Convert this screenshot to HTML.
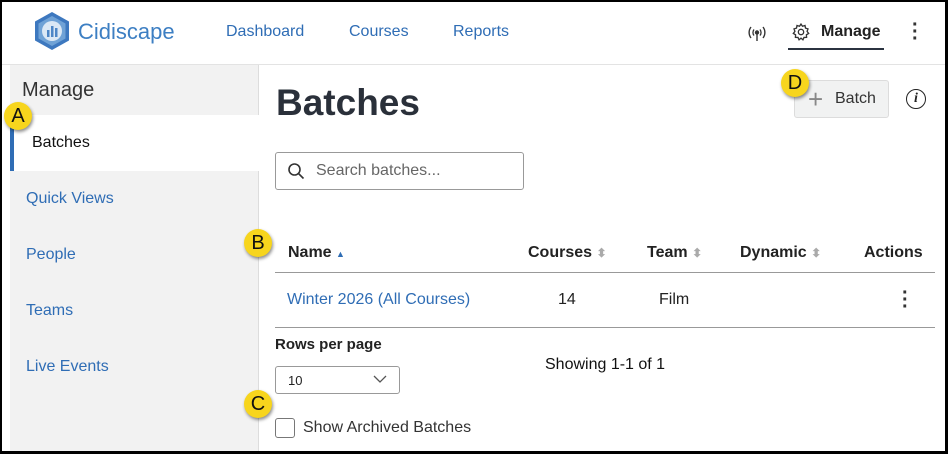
<!DOCTYPE html><html><head><style>
*{margin:0;padding:0;box-sizing:border-box}
body{width:948px;height:454px;position:relative;background:#fff;font-family:"Liberation Sans",sans-serif;overflow:hidden;color:#222}
.a{position:absolute}
.frame{left:0;top:0;width:948px;height:454px;border:2px solid #000;border-right-width:3px;border-bottom-width:3px;z-index:10;pointer-events:none}
.nav{color:#2f6db5;font-size:16px;top:23px}
.side{left:10px;top:65px;width:249px;height:389px;background:#f2f2f2;border-right:1px solid #ddd}
.si{left:26px;color:#2f6db5;font-size:16px}
.badge{width:28px;height:28px;border-radius:50%;background:#f7d51d;font-size:20px;color:#111;text-align:center;line-height:28px;box-shadow:1px 2px 3px rgba(0,0,0,.45);z-index:5}
.th{font-weight:bold;font-size:16px;top:244px;color:#222}
.sort{color:#aaa;font-size:12px}
</style></head><body>
<div class="a frame"></div>
<svg class="a" style="left:32px;top:11px" width="40" height="40" viewBox="0 0 40 40"><polygon points="20,1 37,10.5 37,29.5 20,39 3,29.5 3,10.5" fill="#3d78bf"/><polygon points="20,5 33.5,12.5 33.5,27.5 20,35 6.5,27.5 6.5,12.5" fill="#6fa2d6"/><circle cx="20" cy="20" r="10" fill="#dbe8f5"/><rect x="15" y="19" width="2.5" height="7" fill="#4d86c6"/><rect x="19" y="15" width="2.5" height="11" fill="#4d86c6"/><rect x="23" y="17" width="2.5" height="9" fill="#4d86c6"/></svg>
<div class="a" style="left:78px;top:19px;font-size:22px;color:#3d7fc3">Cidiscape</div>
<div class="a nav" style="left:226px">Dashboard</div>
<div class="a nav" style="left:349px">Courses</div>
<div class="a nav" style="left:453px">Reports</div>
<svg class="a" style="left:746px;top:24px" width="22" height="18" viewBox="0 0 22 18" fill="none" stroke="#333" stroke-width="1.4"><path d="M5 3a9 9 0 0 0 0 11M17 3a9 9 0 0 1 0 11M8 5.5a5 5 0 0 0 0 6M14 5.5a5 5 0 0 1 0 6"/><circle cx="11" cy="8.5" r="1.5" fill="#333"/><path d="M11 10v7"/></svg>
<svg class="a" style="left:791px;top:22px" width="20" height="20" viewBox="0 0 24 24" fill="none" stroke="#333" stroke-width="1.6"><circle cx="12" cy="12" r="3.2"/><path d="M12 2.5l1.8 2.6 3-.9.6 3.1 3 1-1.1 3 1.9 2.4-2.7 1.6.2 3.1-3.1.1-1.3 2.9-2.3-2-2.3 2-1.3-2.9-3.1-.1.2-3.1-2.7-1.6 1.9-2.4-1.1-3 3-1 .6-3.1 3 .9z"/></svg>
<div class="a" style="left:821px;top:23px;font-size:16px;font-weight:bold;color:#222">Manage</div>
<div class="a" style="left:788px;top:48px;width:96px;height:2px;background:#2b3340"></div>
<div class="a" style="left:912px;top:22px;font-size:20px;font-weight:bold;line-height:7px;color:#333">·<br>·<br>·</div>
<div class="a" style="left:0;top:64px;width:948px;height:1px;background:#e3e3e3"></div>
<div class="a side"></div>
<div class="a" style="left:22px;top:79px;font-size:20px;color:#333">Manage</div>
<div class="a" style="left:10px;top:115px;width:249px;height:56px;background:#fff;border-left:4px solid #2f6db5"></div>
<div class="a" style="left:32px;top:134px;font-size:16px;color:#111">Batches</div>
<div class="a si" style="top:190px">Quick Views</div>
<div class="a si" style="top:246px">People</div>
<div class="a si" style="top:302px">Teams</div>
<div class="a si" style="top:358px">Live Events</div>
<div class="a" style="left:276px;top:82px;font-size:37px;font-weight:bold;color:#2a303a">Batches</div>
<div class="a" style="left:794px;top:80px;width:95px;height:38px;background:#f1f2f2;border:1px solid #dcdcdc;border-radius:3px"></div>
<div class="a" style="left:808px;top:84px;font-size:26px;color:#888;font-weight:300">+</div>
<div class="a" style="left:835px;top:90px;font-size:16px;color:#333">Batch</div>
<div class="a" style="left:906px;top:89px;width:20px;height:20px;border:1.5px solid #222;border-radius:50%;text-align:center;font:italic bold 14px/18px 'Liberation Serif',serif">i</div>
<div class="a" style="left:275px;top:152px;width:249px;height:38px;border:1px solid #999;border-radius:3px"></div>
<svg class="a" style="left:287px;top:162px" width="18" height="18" viewBox="0 0 18 18" fill="none" stroke="#333" stroke-width="1.6"><circle cx="7.5" cy="7.5" r="5.5"/><path d="M11.5 11.5l5 5"/></svg>
<div class="a" style="left:316px;top:162px;font-size:16px;color:#666">Search batches...</div>
<div class="a th" style="left:288px">Name <span style="color:#2f6db5;font-size:9px">▲</span></div>
<div class="a th" style="left:528px">Courses <span class="sort">⬍</span></div>
<div class="a th" style="left:647px">Team <span class="sort">⬍</span></div>
<div class="a th" style="left:740px">Dynamic <span class="sort">⬍</span></div>
<div class="a th" style="left:864px">Actions</div>
<div class="a" style="left:275px;top:272px;width:660px;height:1px;background:#999"></div>
<div class="a" style="left:287px;top:291px;font-size:16px;color:#2f6db5">Winter 2026 (All Courses)</div>
<div class="a" style="left:558px;top:291px;font-size:16px">14</div>
<div class="a" style="left:659px;top:291px;font-size:16px">Film</div>
<div class="a" style="left:902px;top:290px;font-size:20px;font-weight:bold;line-height:7px;color:#333">·<br>·<br>·</div>
<div class="a" style="left:275px;top:327px;width:660px;height:1px;background:#999"></div>
<div class="a" style="left:275px;top:336px;font-size:15px;font-weight:bold">Rows per page</div>
<div class="a" style="left:275px;top:366px;width:125px;height:28px;border:1px solid #999;border-radius:3px"></div>
<div class="a" style="left:288px;top:373px;font-size:13px">10</div>
<svg class="a" style="left:373px;top:375px" width="14" height="9" viewBox="0 0 14 9" fill="none" stroke="#555" stroke-width="1.3"><path d="M1 1l6 6 6-6"/></svg>
<div class="a" style="left:545px;top:356px;font-size:16px;color:#111">Showing 1-1 of 1</div>
<div class="a" style="left:275px;top:418px;width:20px;height:20px;border:1px solid #777;border-radius:3px"></div>
<div class="a" style="left:303px;top:419px;font-size:16px;color:#333">Show Archived Batches</div>
<div class="a badge" style="left:4px;top:102px">A</div>
<div class="a badge" style="left:244px;top:229px">B</div>
<div class="a badge" style="left:244px;top:390px">C</div>
<div class="a badge" style="left:781px;top:69px">D</div>
</body></html>
